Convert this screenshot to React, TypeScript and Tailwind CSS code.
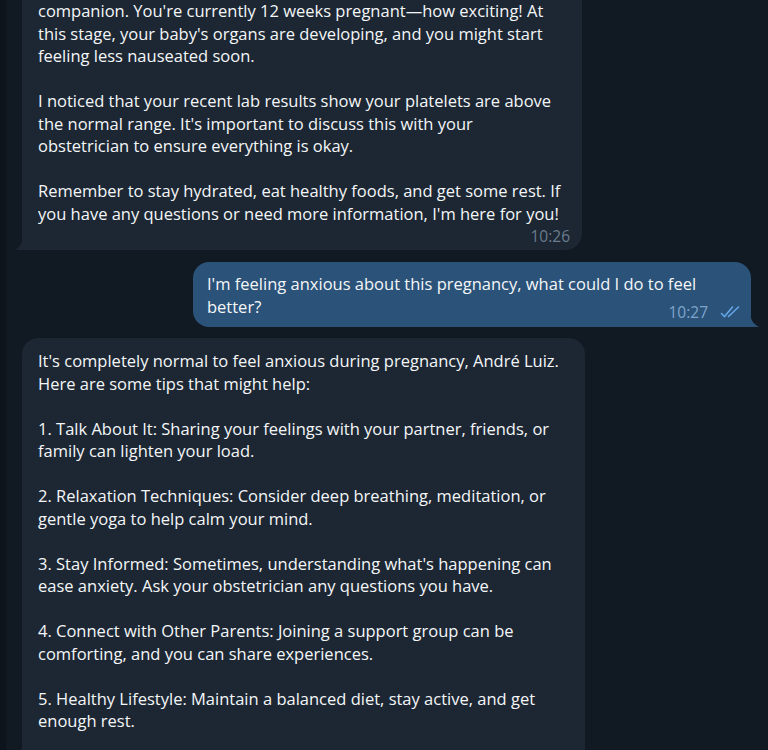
const first = [
  "companion. You're currently 12 weeks pregnant\u2014how exciting! At",
  "this stage, your baby's organs are developing, and you might start",
  'feeling less nauseated soon.',
  '',
  'I noticed that your recent lab results show your platelets are above',
  "the normal range. It's important to discuss this with your",
  'obstetrician to ensure everything is okay.',
  '',
  'Remember to stay hydrated, eat healthy foods, and get some rest. If',
  "you have any questions or need more information, I'm here for you!",
];

const outgoing = ["I'm feeling anxious about this pregnancy, what could I do to feel", 'better?'];

const third = [
  "It's completely normal to feel anxious during pregnancy, Andr\u00e9 Luiz.",
  'Here are some tips that might help:',
  '',
  '1. Talk About It: Sharing your feelings with your partner, friends, or',
  'family can lighten your load.',
  '',
  '2. Relaxation Techniques: Consider deep breathing, meditation, or',
  'gentle yoga to help calm your mind.',
  '',
  "3. Stay Informed: Sometimes, understanding what's happening can",
  'ease anxiety. Ask your obstetrician any questions you have.',
  '',
  '4. Connect with Other Parents: Joining a support group can be',
  'comforting, and you can share experiences.',
  '',
  '5. Healthy Lifestyle: Maintain a balanced diet, stay active, and get',
  'enough rest.',
];

function Lines({ lines }: { lines: string[] }) {
  return (
    <div className="text-[16.5px] leading-[22.5px] text-[#f4f6f8]">
      {lines.map((line, i) => (
        <div key={i} className="h-[22.5px] whitespace-nowrap">
          {line}
        </div>
      ))}
    </div>
  );
}

function LeftTail() {
  return (
    <svg className="absolute bottom-0 left-[-7px]" width="8" height="16" viewBox="0 0 8 16">
      <path d="M8 0 C8 8 5 13 0 16 L8 16 Z" fill="#1c2733" />
    </svg>
  );
}

function RightTail() {
  return (
    <svg className="absolute bottom-0 right-[-8px]" width="9" height="16" viewBox="0 0 9 16">
      <path d="M0 0 C0 8 3 13 9 16 L0 16 Z" fill="#2b5278" />
    </svg>
  );
}

function DoubleCheck() {
  return (
    <svg width="22" height="14" viewBox="0 0 22 14" fill="none" stroke="#64a6e8" strokeWidth="1.6" strokeLinecap="round">
      <path d="M1.5 8.5 L4.5 11.5 L12.5 2" />
      <path d="M8.5 11.5 L18.5 2" />
    </svg>
  );
}

export default function App() {
  return (
    <div className="flex h-[750px] w-[768px] overflow-hidden bg-[#111923] font-['Open_Sans',sans-serif]">
      <div className="w-[6px] shrink-0 bg-[#0e141b]" />
      <div className="flex flex-1 flex-col pl-[16px]">
        <div className="relative w-[560px] rounded-br-[16px] bg-[#1c2733] pb-[25px] pl-[16px]">
          <Lines lines={first} />
          <span className="absolute bottom-[4px] right-[12px] text-[15.5px] leading-[20px] text-[#6a7c8e]">10:26</span>
          <LeftTail />
        </div>

        <div className="mt-[12px] flex justify-end pr-[17px]">
          <div className="relative w-[558px] rounded-t-[16px] rounded-bl-[16px] bg-[#2b5278] pb-[9px] pl-[14px] pt-[11px]">
            <Lines lines={outgoing} />
            <div className="absolute bottom-[5px] right-[9px] flex items-center gap-[12px]">
              <span className="text-[15.5px] leading-[20px] text-[#7ea6cc]">10:27</span>
              <DoubleCheck />
            </div>
            <RightTail />
          </div>
        </div>

        <div className="mt-[11px] w-[563px] rounded-t-[16px] bg-[#1c2733] pb-[40px] pl-[16px] pt-[12px]">
          <Lines lines={third} />
        </div>
      </div>
    </div>
  );
}
